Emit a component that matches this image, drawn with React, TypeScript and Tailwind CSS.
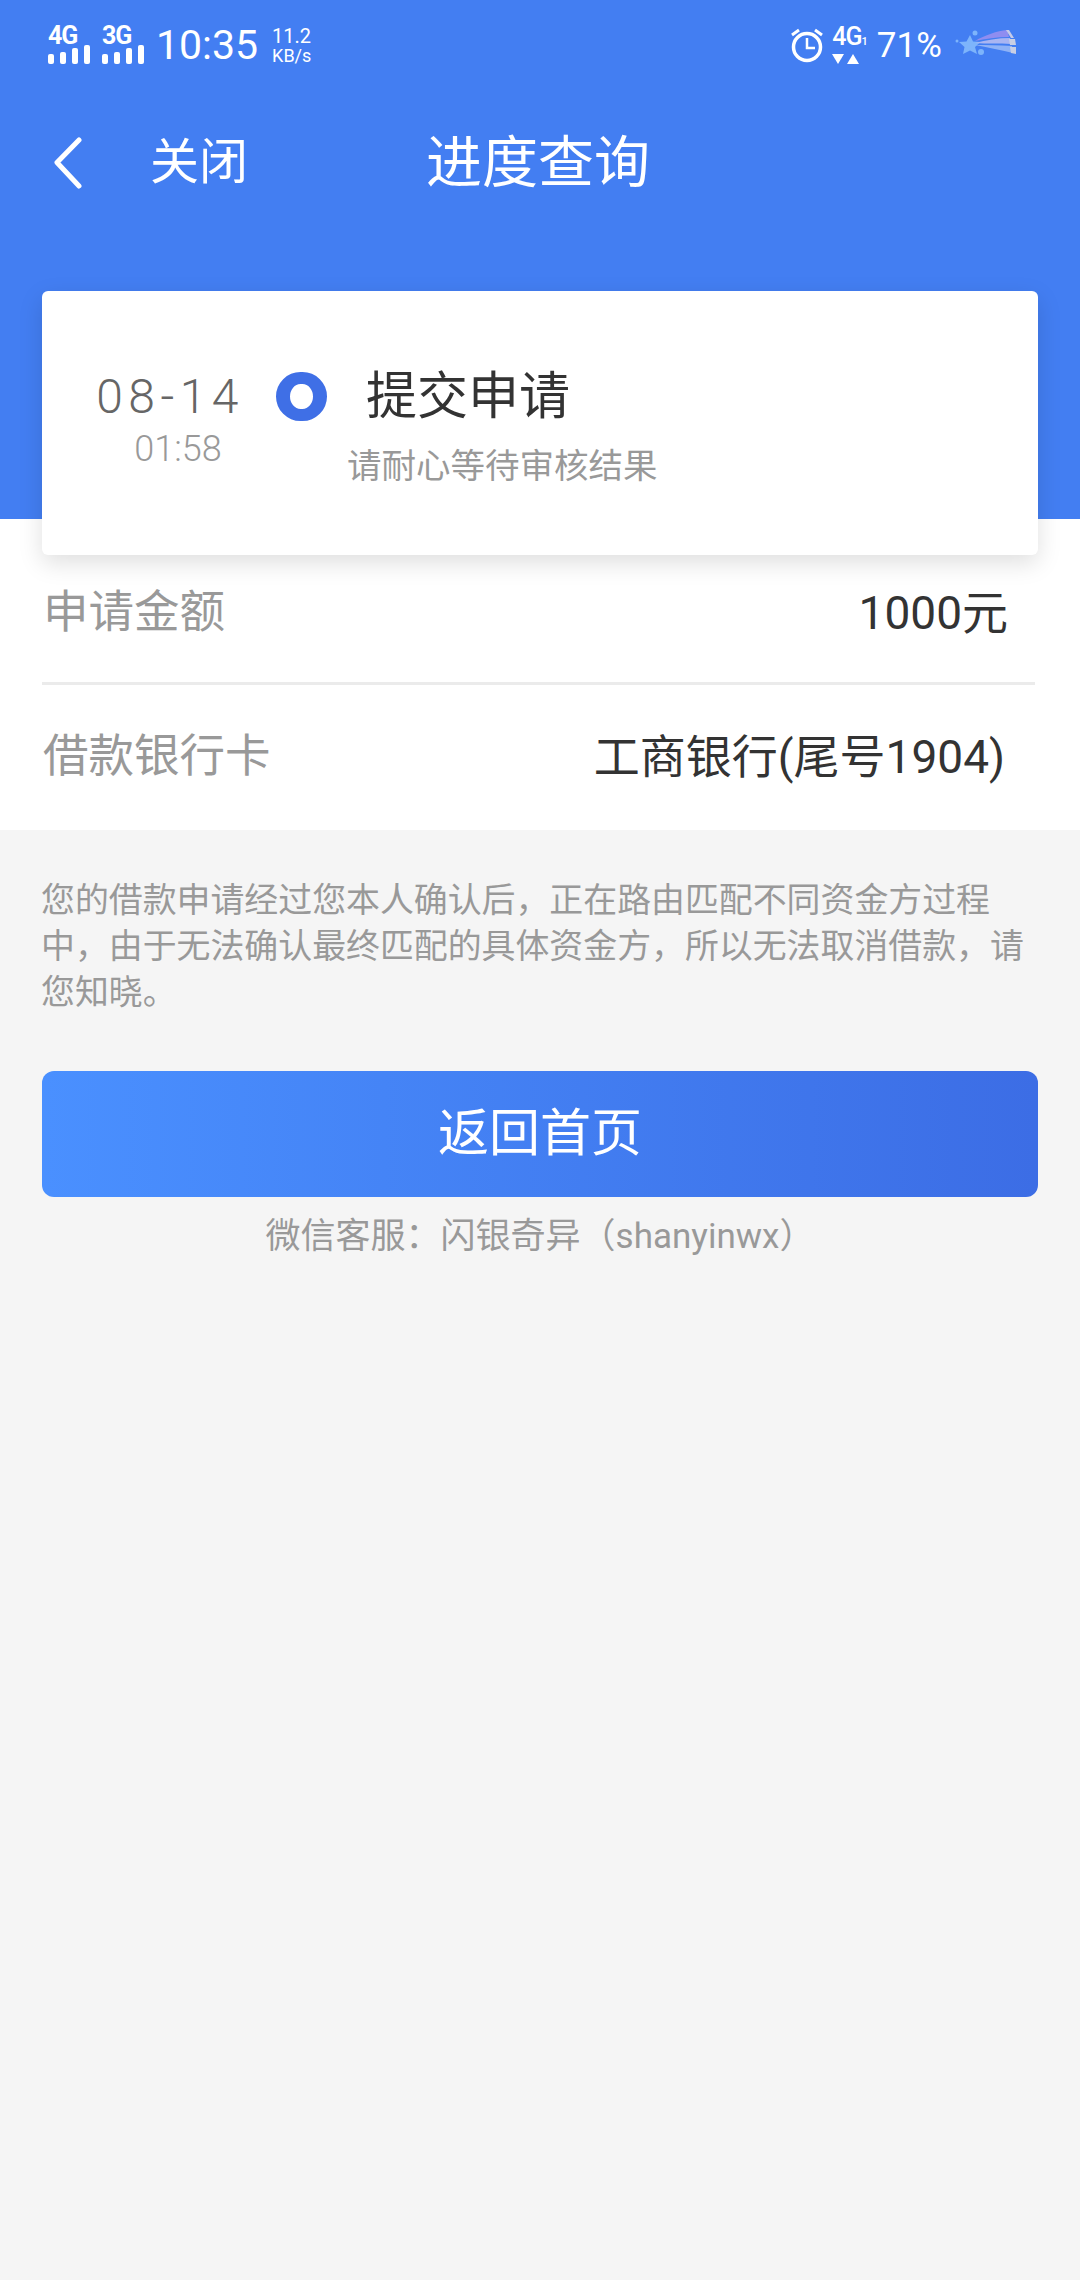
const font = "font-['Roboto','Noto_Sans_CJK_SC',sans-serif]"

function Signal({ label }: { label: string }) {
  return (
    <div className="flex w-[44px] flex-col">
      <span className="h-[18px] text-[25px] leading-[18px] font-bold tracking-[-1px] text-white">{label}</span>
      <div className="flex items-end gap-[6px]">
        <div className="h-[10px] w-[6px] rounded-[2px] bg-white" />
        <div className="h-[12px] w-[6px] rounded-[2px] bg-white" />
        <div className="h-[16px] w-[6px] rounded-[2px] bg-white" />
        <div className="h-[19px] w-[6px] rounded-[2px] bg-white" />
      </div>
    </div>
  )
}

function AlarmIcon() {
  return (
    <svg width="34" height="36" viewBox="0 0 34 36" fill="none" stroke="white" strokeWidth="3.500">
      <circle cx="17" cy="20" r="13.500" />
      <path d="M17 11v10h8" strokeWidth="2.500" />
      <path d="M2 8l7-5M32 8l-7-5" strokeWidth="3" />
    </svg>
  )
}

function StarIcon() {
  return (
    <svg width="64" height="32" viewBox="0 0 64 32">
      <path d="M15 6l3 6.500 7.500.5-5.500 5 2 7-7-3.500-7 3.500 1.500-7-5.500-5 7.500-.5z" fill="#7db4fb" />
      <circle cx="20" cy="4" r="2.500" fill="#7db4fb" />
      <circle cx="26" cy="23" r="3" fill="#7db4fb" />
      <circle cx="2" cy="12" r="1.500" fill="#7db4fb" />
      <path d="M20 12C30 6 42 2 52 1l2 7C42 8 30 10 20 12z" fill="#8f8df0" />
      <path d="M20 14c11-3 23-5 35-5l1 6c-12-1-24 0-36-1z" fill="#a9b5f2" />
      <path d="M20 16c12 0 24 0 37 1l1 7c-13-3-26-6-38-8z" fill="#8fb2f6" />
      <path d="M51 1l3 0 5 8-3 0z" fill="#c6cbe8" />
      <path d="M54 10h6l1 6h-6zM55 18h6l0 7-5-1z" fill="#c9cfe4" />
    </svg>
  )
}

function InfoRow({ label, value, className }: { label: string; value: string; className: string }) {
  return (
    <div className={`flex items-center justify-between pl-[1px] ${className}`}>
      <span className="text-[45.500px] text-[#999999]">{label}</span>
      <span className="text-[46px] text-[#333333]">{value}</span>
    </div>
  )
}

export default function App() {
  return (
    <div className={`h-[2280px] w-[1080px] overflow-hidden bg-[#f5f5f5] ${font}`}>
      <div className="h-[519px] bg-[#437ef2]">
        <div className="flex h-[90px] items-center pl-[48px]">
          <div className="flex gap-[10px]">
            <Signal label="4G" />
            <Signal label="3G" />
          </div>
          <span className="ml-[10px] text-[41px] leading-none text-white">10:35</span>
          <div className="ml-[14px] flex flex-col gap-[1px] text-white">
            <span className="text-[20px] leading-[20px]">11.2</span>
            <span className="text-[18px] leading-[18px]">KB/s</span>
          </div>
          <div className="ml-[479px] flex items-center">
            <AlarmIcon />
            <div className="ml-[8px] flex flex-col items-start">
              <span className="text-[25px] leading-[20px] font-medium tracking-[-1px] text-white">
                4G<span className="text-[11px]">1</span>
              </span>
              <span className="mt-[2px] flex gap-[3px]">
                <span className="h-0 w-0 border-x-[6px] border-t-[10px] border-x-transparent border-t-white" />
                <span className="h-0 w-0 border-x-[6px] border-b-[10px] border-x-transparent border-b-white" />
              </span>
            </div>
            <span className="ml-[10px] text-[35px] leading-none text-white">71%</span>
            <div className="ml-[13px]">
              <StarIcon />
            </div>
          </div>
        </div>
        <div className="mt-[31px] flex h-[84px] items-center pl-[50px] text-white">
          <svg width="36" height="52" viewBox="0 0 36 52" fill="none" stroke="white" strokeWidth="5" strokeLinecap="round" strokeLinejoin="round">
            <path d="M29 3L7 25.500 29 49" />
          </svg>
          <span className="ml-[64px] text-[49px]">关闭</span>
          <span className="ml-[178px] text-[56px]">进度查询</span>
        </div>

        <div className="relative z-10 mx-[42px] mt-[86px] flex h-[264px] rounded-[6px] bg-white shadow-[0_8px_24px_rgba(0,0,0,0.13)]">
          <div className="mt-[78px] flex w-[192px] flex-col items-end">
            <span className="mr-[-10px] text-[48px] leading-[56px] font-light tracking-[5.500px] text-[#666666]">08-14</span>
            <span className="mt-[3px] mr-[-4px] w-[120px] text-center text-[36px] leading-[42px] font-light text-[#999999]">01:58</span>
          </div>
          <div className="mt-[81px] ml-[42px] h-[49px] w-[51px] rounded-full border-x-[14px] border-y-[12px] border-[#3f6fe6] bg-white" />
          <div className="mt-[71px] flex flex-col">
            <span className="ml-[39px] text-[51px] leading-[70px] text-[#333333]">提交申请</span>
            <span className="mt-[9px] ml-[20px] text-[34.500px] leading-[50px] text-[#999999]">请耐心等待审核结果</span>
          </div>
        </div>
      </div>

      <div className="bg-white px-[42px] pt-[21px]">
        <InfoRow label="申请金额" value="1000元" className="h-[142px] pt-[4px] pr-[30px]" />
        <div className="mr-[3px] h-[3px] bg-[#ebebeb]" />
        <InfoRow label="借款银行卡" value="工商银行(尾号1904)" className="h-[145px] pr-[33px]" />
      </div>

      <p className="mt-[48px] mr-[42px] ml-[41px] text-[33.900px] leading-[46px] text-[#999999]">
        您的借款申请经过您本人确认后，正在路由匹配不同资金方过程中，由于无法确认最终匹配的具体资金方，所以无法取消借款，请您知晓。
      </p>

      <div className="mx-[42px] mt-[55px] flex h-[126px] items-center justify-center rounded-[12px] bg-gradient-to-r from-[#4a90ff] to-[#3c6de5] text-[51px] text-white">
        返回首页
      </div>
      <p className="mt-[15px] text-center text-[35px] leading-[50px] text-[#999999]">微信客服：闪银奇异（shanyinwx）</p>
    </div>
  )
}
